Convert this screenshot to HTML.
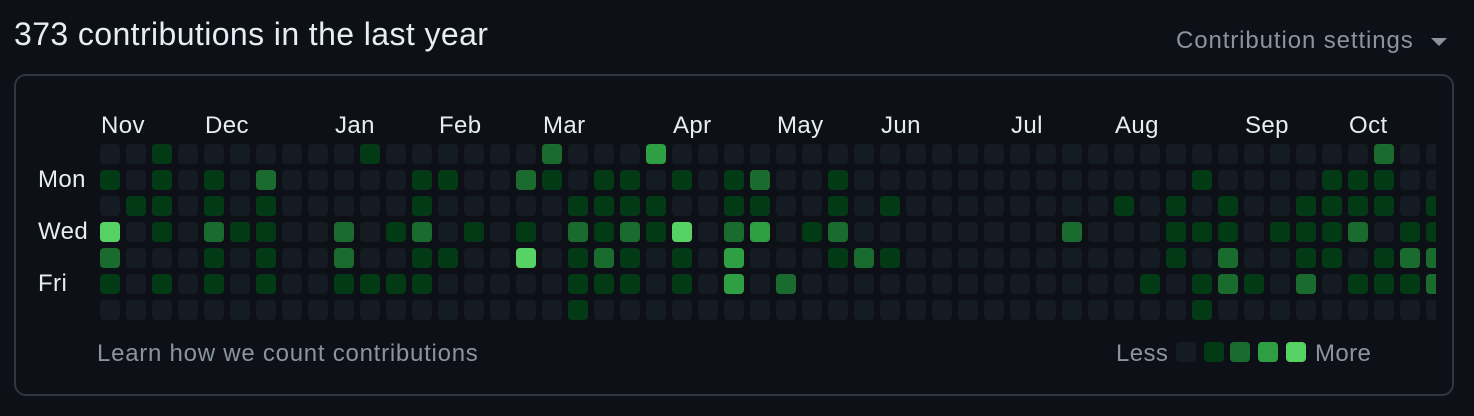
<!DOCTYPE html>
<html><head><meta charset="utf-8"><style>
html,body{margin:0;padding:0;background:#0d1117;width:1474px;height:416px;overflow:hidden;font-family:"Liberation Sans",sans-serif;}
.t{position:absolute;left:14px;top:16px;font-size:32px;color:#e6edf3;white-space:nowrap;letter-spacing:0.4px}
.cs{position:absolute;left:1176px;top:27px;font-size:24px;color:#8b949e;white-space:nowrap;letter-spacing:0.9px}
.caret{position:absolute;left:1431px;top:38px;width:0;height:0;border-left:8px solid transparent;border-right:8px solid transparent;border-top:8px solid #8b949e}
.box{position:absolute;left:14px;top:74px;width:1440px;height:322px;border:2px solid #30363d;border-radius:12px;box-sizing:border-box}
.m,.d,.f{position:absolute;font-size:24px;color:#e6edf3;white-space:nowrap;letter-spacing:0.4px}
.f{color:#8b949e}
.ft{letter-spacing:0.75px}
.grid{position:absolute;left:100px;top:144px;width:1336px;height:180px;overflow:hidden}
.c{position:absolute;width:20px;height:20px;border-radius:4px}
.l0{background:#151b23}.l1{background:#033a16}.l2{background:#196c2e}.l3{background:#2ea043}.l4{background:#56d364}
</style></head><body>
<div class="t">373 contributions in the last year</div>
<div class="cs">Contribution settings</div><div class="caret"></div>
<div class="box"></div>
<div class="m" style="left:101px;top:112px">Nov</div>
<div class="m" style="left:205px;top:112px">Dec</div>
<div class="m" style="left:335px;top:112px">Jan</div>
<div class="m" style="left:439px;top:112px">Feb</div>
<div class="m" style="left:543px;top:112px">Mar</div>
<div class="m" style="left:673px;top:112px">Apr</div>
<div class="m" style="left:777px;top:112px">May</div>
<div class="m" style="left:881px;top:112px">Jun</div>
<div class="m" style="left:1011px;top:112px">Jul</div>
<div class="m" style="left:1115px;top:112px">Aug</div>
<div class="m" style="left:1245px;top:112px">Sep</div>
<div class="m" style="left:1349px;top:112px">Oct</div>
<div class="d" style="left:38px;top:166px">Mon</div>
<div class="d" style="left:38px;top:218px">Wed</div>
<div class="d" style="left:38px;top:270px">Fri</div>
<div class="grid" id="g"></div>
<div class="f ft" style="left:97px;top:340px">Learn how we count contributions</div>
<div class="f" style="left:1116px;top:340px">Less</div>
<div class="c l0" style="left:1176px;top:342px"></div>
<div class="c l1" style="left:1204px;top:342px"></div>
<div class="c l2" style="left:1230px;top:342px"></div>
<div class="c l3" style="left:1258px;top:342px"></div>
<div class="c l4" style="left:1286px;top:342px"></div>
<div class="f" style="left:1315px;top:340px">More</div>
<script>
var d=["0104210","0010000","1111010","0000000","0112110","0001000","0211110","0000000","0000000","0002210","1000010","0001010","0112110","0100100","0001000","0000000","0201400","2100000","0012111","0111210","0112110","3011000","0104110","0000000","0112330","0213000","0000020","0001000","0112100","0000200","0010100","0000000","0000000","0000000","0000000","0000000","0000000","0002000","0000000","0010000","0000010","0011100","0101011","0011220","0000010","0001000","0011120","0111100","0112010","2110110","0001210","0011220"];
var g=document.getElementById('g'),h='';
for(var k=0;k<d.length;k++)for(var r=0;r<7;r++)h+='<div class="c l'+d[k][r]+'" style="left:'+(26*k)+'px;top:'+(26*r)+'px"></div>';
g.innerHTML=h;
</script>
</body></html>
